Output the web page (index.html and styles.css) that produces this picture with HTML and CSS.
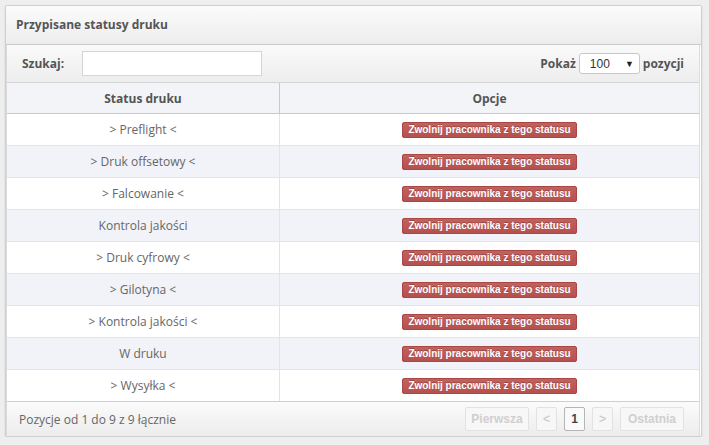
FILE: index.html
```html
<!DOCTYPE html>
<html lang="pl">
<head>
<meta charset="utf-8">
<title>Przypisane statusy druku</title>
<link rel="stylesheet" href="styles.css">
</head>
<body>
<div class="widget">
  <div class="widget-header">Przypisane statusy druku</div>
  <div class="widget-body">
    <div class="toolbar">
      <label class="search">Szukaj: <span class="input"></span></label>
      <div class="length">Pokaż <span class="select">100<span class="arrow">▼</span></span> pozycji</div>
    </div>
    <table class="grid">
      <thead>
        <tr><th class="c1">Status druku</th><th>Opcje</th></tr>
      </thead>
      <tbody>
        <tr><td>&gt; Preflight &lt;</td><td><span class="btn">Zwolnij pracownika z tego statusu</span></td></tr>
        <tr><td>&gt; Druk offsetowy &lt;</td><td><span class="btn">Zwolnij pracownika z tego statusu</span></td></tr>
        <tr><td>&gt; Falcowanie &lt;</td><td><span class="btn">Zwolnij pracownika z tego statusu</span></td></tr>
        <tr><td>Kontrola jakości</td><td><span class="btn">Zwolnij pracownika z tego statusu</span></td></tr>
        <tr><td>&gt; Druk cyfrowy &lt;</td><td><span class="btn">Zwolnij pracownika z tego statusu</span></td></tr>
        <tr><td>&gt; Gilotyna &lt;</td><td><span class="btn">Zwolnij pracownika z tego statusu</span></td></tr>
        <tr><td>&gt; Kontrola jakości &lt;</td><td><span class="btn">Zwolnij pracownika z tego statusu</span></td></tr>
        <tr><td>W druku</td><td><span class="btn">Zwolnij pracownika z tego statusu</span></td></tr>
        <tr><td>&gt; Wysyłka &lt;</td><td><span class="btn">Zwolnij pracownika z tego statusu</span></td></tr>
      </tbody>
    </table>
    <div class="footer">
      <div class="info">Pozycje od 1 do 9 z 9 łącznie</div>
      <div class="pager">
        <span class="pg wide disabled">Pierwsza</span>
        <span class="pg disabled">&lt;</span>
        <span class="pg active">1</span>
        <span class="pg disabled">&gt;</span>
        <span class="pg wide disabled">Ostatnia</span>
      </div>
    </div>
  </div>
</div>
</body>
</html>
```

FILE: styles.css
```css
html, body {
  margin: 0;
  padding: 0;
}
body {
  background: #eeeeee;
  font-family: "Open Sans", "Liberation Sans", sans-serif;
  font-size: 12px;
  color: #666;
  padding: 5px 7px 0 5px;
}
.widget {
  border: 1px solid #cfcfcf;
  border-radius: 2px;
  box-shadow: 0 1px 2px rgba(0,0,0,0.12);
  background: #fff;
}
.widget-header {
  height: 38px;
  line-height: 38px;
  padding-left: 10px;
  font-weight: bold;
  color: #555;
  background: linear-gradient(#fbfbfb, #ededed);
  border-bottom: 1px solid #cacaca;
}
.widget-body {
  border-left: 1px solid #dcdcdc;
  border-right: 1px solid #dcdcdc;
  margin: 0 1px 0 0;
}
.toolbar {
  height: 37px;
  display: flex;
  align-items: center;
  justify-content: space-between;
  padding: 0 15px 0 15px;
  background: linear-gradient(#fafafa, #ededed);
  border-bottom: 1px solid #d5d5d5;
}
.search {
  font-weight: bold;
  color: #555;
  display: flex;
  align-items: center;
  gap: 18px;
}
.input {
  display: inline-block;
  width: 178px;
  height: 23px;
  border: 1px solid #d5d5d5;
  background: #fff;
}
.length {
  font-weight: bold;
  color: #555;
  display: flex;
  align-items: center;
  gap: 3px;
}
.select {
  display: inline-flex;
  align-items: center;
  justify-content: space-between;
  width: 44px;
  height: 19px;
  padding: 0 5px 0 10px;
  border: 1px solid #c8c8c8;
  border-radius: 3px;
  background: #fff;
  font-family: "Liberation Sans", Arial, sans-serif;
  font-weight: normal;
  font-size: 12px;
  color: #333;
}
.arrow {
  font-size: 9px;
  color: #222;
}
.grid {
  width: 100%;
  border-collapse: collapse;
  table-layout: fixed;
}
.grid th {
  height: 30px;
  padding: 0;
  background: #f2f4f8;
  color: #555;
  font-weight: bold;
  border-bottom: 1px solid #c9c9c9;
}
.grid th.c1 {
  width: 272px;
  border-right: 1px solid #c9c9c9;
}
.grid td {
  height: 31px;
  padding: 0;
  text-align: center;
  border-bottom: 1px solid #e4e4e4;
}
.grid td:first-child {
  border-right: 1px solid #e4e4e4;
}
.grid tbody tr:nth-child(even) td {
  background: #f1f3f8;
}
.grid tbody tr:last-child td {
  border-bottom: 1px solid #cfcfcf;
}
.btn {
  display: inline-block;
  white-space: nowrap;
  height: 16px;
  line-height: 14px;
  padding: 0 5px;
  box-sizing: border-box;
  font-family: "Liberation Sans", Arial, sans-serif;
  font-weight: bold;
  font-size: 10px;
  color: #fff;
  text-shadow: 0 -1px 0 rgba(0,0,0,0.25);
  background: linear-gradient(#c4605d, #b4504d);
  border: 1px solid #a84744;
  border-radius: 2px;
  vertical-align: middle;
}
.footer {
  height: 34px;
  display: flex;
  align-items: center;
  justify-content: space-between;
  padding: 0 15px 0 12px;
  background: linear-gradient(#fbfbfb, #ececec);
}
.pager {
  display: flex;
  gap: 7px;
}
.pg {
  display: inline-flex;
  align-items: center;
  justify-content: center;
  box-sizing: border-box;
  width: 21px;
  height: 24px;
  border: 1px solid #e2e2e2;
  border-radius: 2px;
  background: #f7f7f7;
  font-family: "Liberation Sans", Arial, sans-serif;
  font-size: 12px;
  font-weight: bold;
}
.pg.wide {
  width: 64px;
}
.pg.disabled {
  color: #cfcfcf;
}
.pg.active {
  border-color: #b5b5b5;
  background: #fafafa;
  color: #444;
}
```
